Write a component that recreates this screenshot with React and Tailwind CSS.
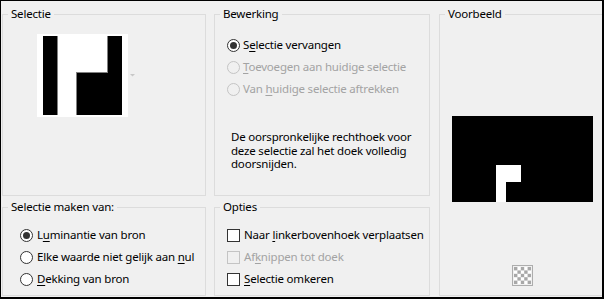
import React from 'react'

const font = { fontFamily: '"Noto Sans", "Open Sans", sans-serif' }

// letter with the keyboard-mnemonic underline
const U = ({ children }) => <span className="underline underline-offset-2">{children}</span>

const Radio = ({ checked, disabled }) => (
  <span
    className={`w-[13px] h-[13px] rounded-full border flex items-center justify-center shrink-0 ${
      disabled ? 'border-[#c4c4c4] bg-[#f0f0f0]' : 'border-[#333333] bg-white'
    }`}
  >
    {checked && <span className="w-[7px] h-[7px] rounded-full bg-[#333333]" />}
  </span>
)

const Check = ({ disabled }) => (
  <span
    className={`w-[13px] h-[13px] border shrink-0 ${
      disabled ? 'border-[#c4c4c4] bg-[#f0f0f0]' : 'border-[#333333] bg-white'
    }`}
  />
)

const Group = ({ label, className, children }) => (
  <fieldset className={`border border-[#dcdcdc] ${className}`}>
    <legend className="ml-[5px] px-[3px] leading-[16px] text-black whitespace-nowrap">{label}</legend>
    {children}
  </fieldset>
)

const Row = ({ control, disabled, gap = 'gap-[3px]', children }) => (
  <div
    className={`h-[22px] flex items-center whitespace-nowrap ${gap} ${
      disabled ? 'text-[#a3a3a3]' : 'text-black'
    }`}
  >
    {control}
    <span>{children}</span>
  </div>
)

const SourceThumb = () => (
  <svg width="100" height="83" viewBox="0 0 100 83">
    <rect x="0" y="0" width="91" height="83" fill="#fff" />
    <rect x="6" y="2" width="14" height="79" fill="#000" />
    <rect x="20" y="2" width="1" height="79" fill="#808080" />
    <rect x="71" y="2" width="14" height="79" fill="#000" />
    <rect x="70" y="2" width="1" height="37" fill="#808080" />
    <rect x="40" y="39" width="45" height="42" fill="#000" />
    <rect x="40" y="38" width="31" height="1" fill="#808080" />
    <rect x="39" y="38" width="1" height="43" fill="#808080" />
    <path d="M93 40 L98 40 L95.5 42.5 Z" fill="#c8c8c8" />
  </svg>
)

const Checker = () => (
  <svg width="21" height="21" viewBox="0 0 21 21">
    <rect x="0.5" y="0.5" width="20" height="20" fill="#f0f0f0" stroke="#adadad" />
    <rect x="2" y="2" width="17" height="17" fill="#ffffff" />
    {[0, 1, 2, 3, 4].map((r) =>
      [0, 1, 2, 3, 4].map((c) =>
        (r + c) % 2 === 0 ? (
          <rect key={`${r}-${c}`} x={2 + c * 3.4} y={2 + r * 3.4} width="3.4" height="3.4" fill="#a8a8a8" />
        ) : null
      )
    )}
  </svg>
)

export default function App() {
  return (
    <div
      style={font}
      className="w-[604px] h-[299px] bg-[#f0f0f0] border-t border-l border-r-2 border-b-2 border-black overflow-hidden text-[11.5px] tracking-[-0.2px] pt-[5px] pl-[1px] flex"
    >
      {/* left column */}
      <div className="flex flex-col">
        <Group label="Selectie" className="w-[204px] h-[190px]">
          <div className="mt-[12px] ml-[34px]">
            <SourceThumb />
          </div>
        </Group>
        <Group label="Selectie maken van:" className="w-[204px] h-[97px] mt-[3px]">
          <div className="mt-[9px] pl-[17px]">
            <Row control={<Radio checked />} gap="gap-[4px]">
              L<U>u</U>minantie van bron
            </Row>
            <Row control={<Radio />} gap="gap-[4px]">
              Elke waarde niet gelijk aan <U>n</U>ul
            </Row>
            <Row control={<Radio />} gap="gap-[4px]">
              <U>D</U>ekking van bron
            </Row>
          </div>
        </Group>
      </div>

      {/* middle column */}
      <div className="flex flex-col ml-[8px]">
        <Group label="Bewerking" className="w-[216px] h-[190px]">
          <div className="mt-[12px] pl-[12px]">
            <Row control={<Radio checked />}>
              S<U>e</U>lectie vervangen
            </Row>
            <Row control={<Radio disabled />} disabled>
              <U>T</U>oevoegen aan huidige selectie
            </Row>
            <Row control={<Radio disabled />} disabled>
              Van <U>h</U>uidige selectie aftrekken
            </Row>
          </div>
          <p className="mt-[30px] pl-[16px] leading-[13.5px] text-black whitespace-nowrap">
            De oorspronkelijke rechthoek voor
            <br />
            deze selectie zal het doek volledig
            <br />
            doorsnijden.
          </p>
        </Group>
        <Group label="Opties" className="w-[216px] h-[97px] mt-[3px]">
          <div className="mt-[9px] pl-[12px]">
            <Row control={<Check />} gap="gap-[4px]">
              Naar <U>l</U>inkerbovenhoek verplaatsen
            </Row>
            <Row control={<Check disabled />} gap="gap-[4px]" disabled>
              Af<U>k</U>nippen tot doek
            </Row>
            <Row control={<Check />} gap="gap-[4px]">
              <U>S</U>electie omkeren
            </Row>
          </div>
        </Group>
      </div>

      {/* preview column */}
      <Group label="Voorbeeld" className="w-[172px] h-[290px] ml-[9px] shrink-0">
        <div className="mt-[94px] ml-[12px] w-[141px] h-[86px] bg-black flex flex-col">
          <div className="mt-[49px] ml-[44px] w-[25px] h-[17px] bg-white" />
          <div className="ml-[44px] w-[10px] h-[20px] bg-white" />
        </div>
        <div className="mt-[63px] ml-[72px] w-[21px] h-[21px]">
          <Checker />
        </div>
      </Group>
    </div>
  )
}
